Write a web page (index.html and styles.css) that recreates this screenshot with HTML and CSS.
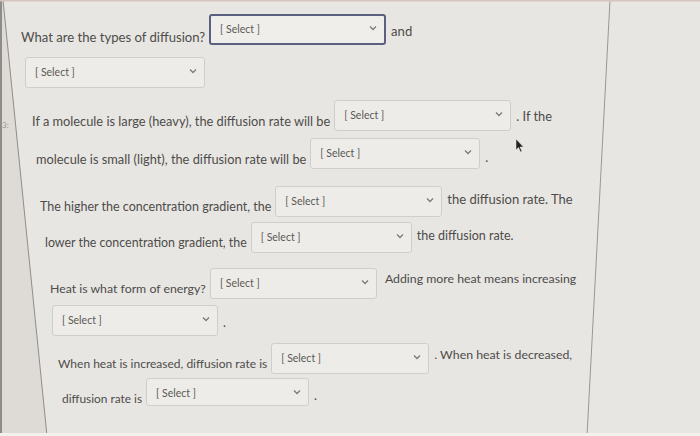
FILE: index.html
```
<!DOCTYPE html>
<html>
<head>
<meta charset="utf-8">
<link rel="stylesheet" href="styles.css">
</head>
<body>
<div class="page">
  <div class="row r1">
    <span class="lead f131">What are the types of diffusion?</span>
    <div class="sel focus w177"><span>[ Select ]</span><svg class="chev" viewBox="0 0 8 6"><path d="M1 1.5 L4 4.5 L7 1.5" /></svg></div>
    <span class="trail f131 t9">and</span>
  </div>
  <div class="row r2">
    <div class="sel w180"><span>[ Select ]</span><svg class="chev" viewBox="0 0 8 6"><path d="M1 1.5 L4 4.5 L7 1.5" /></svg></div>
  </div>

  <div class="row r3">
    <span class="lead f128">If a molecule is large (heavy), the diffusion rate will be</span>
    <div class="sel w177"><span>[ Select ]</span><svg class="chev" viewBox="0 0 8 6"><path d="M1 1.5 L4 4.5 L7 1.5" /></svg></div>
    <span class="trail f128 t8">. If the</span>
  </div>
  <div class="row r4">
    <span class="lead f128">molecule is small (light), the diffusion rate will be</span>
    <div class="sel w170"><span>[ Select ]</span><svg class="chev" viewBox="0 0 8 6"><path d="M1 1.5 L4 4.5 L7 1.5" /></svg></div>
    <span class="trail t12">.</span>
  </div>

  <div class="row r5">
    <span class="lead f125">The higher the concentration gradient, the</span>
    <div class="sel w167"><span>[ Select ]</span><svg class="chev" viewBox="0 0 8 6"><path d="M1 1.5 L4 4.5 L7 1.5" /></svg></div>
    <span class="trail f130 t5">the diffusion rate. The</span>
  </div>
  <div class="row r6">
    <span class="lead f124">lower the concentration gradient, the</span>
    <div class="sel w161"><span>[ Select ]</span><svg class="chev" viewBox="0 0 8 6"><path d="M1 1.5 L4 4.5 L7 1.5" /></svg></div>
    <span class="trail f125 t6">the diffusion rate.</span>
  </div>

  <div class="row r7">
    <span class="lead f123">Heat is what form of energy?</span>
    <div class="sel w167"><span>[ Select ]</span><svg class="chev" viewBox="0 0 8 6"><path d="M1 1.5 L4 4.5 L7 1.5" /></svg></div>
    <span class="trail f123 t3 ml8">Adding more heat means increasing</span>
  </div>
  <div class="row r8">
    <div class="sel w166"><span>[ Select ]</span><svg class="chev" viewBox="0 0 8 6"><path d="M1 1.5 L4 4.5 L7 1.5" /></svg></div>
    <span class="trail t10">.</span>
  </div>

  <div class="row r9">
    <span class="lead f120">When heat is increased, diffusion rate is</span>
    <div class="sel w158"><span>[ Select ]</span><svg class="chev" viewBox="0 0 8 6"><path d="M1 1.5 L4 4.5 L7 1.5" /></svg></div>
    <span class="trail f123 t4">. When heat is decreased,</span>
  </div>
  <div class="row r10">
    <span class="lead f119">diffusion rate is</span>
    <div class="sel w163 short"><span>[ Select ]</span><svg class="chev" viewBox="0 0 8 6"><path d="M1 1.5 L4 4.5 L7 1.5" /></svg></div>
    <span class="trail t10">.</span>
  </div>

  <svg class="frame" viewBox="0 0 700 436" width="700" height="436">
    <polygon points="0,0 3,0 47,436 0,436" fill="#dedbd7" />
    <rect x="0" y="0" width="2" height="436" fill="#8e8b88" />
    <line x1="3" y1="0" x2="47" y2="436" stroke="#8f8c89" stroke-width="1" />
    <line x1="610" y1="0" x2="587" y2="436" stroke="#9a9794" stroke-width="1" />
    <rect x="0" y="0" width="700" height="1.5" fill="#d9c2c0" />
    <rect x="0" y="433" width="700" height="3" fill="#f2f1ee" />
    <text x="2" y="128" class="mark">3:</text>
    <path class="cursor" d="M516 139 L516 150 L518.5 147.5 L520.5 152 L522 151.3 L520 147 L523.5 147 Z" />
  </svg>
</div>
</body>
</html>
```

FILE: styles.css
```
html, body {
  margin: 0;
  padding: 0;
}
body {
  width: 700px;
  height: 436px;
  overflow: hidden;
  background: #e8e6e2;
  font-family: Lato, "Open Sans", sans-serif;
  color: #4d4c4a;
}
.page {
  position: relative;
  width: 700px;
  height: 436px;
}
.row {
  display: flex;
  align-items: flex-start;
  height: 31px;
}
.lead {
  font-size: 12.5px;
  line-height: 16px;
  margin-top: 13px;
  margin-right: 4px;
  white-space: nowrap;
}
.trail {
  font-size: 12.5px;
  line-height: 16px;
  margin-left: 5px;
  white-space: nowrap;
}
.f119 { font-size: 11.9px; }
.f120 { font-size: 12px; }
.f123 { font-size: 12.3px; }
.f124 { font-size: 12.4px; }
.f125 { font-size: 12.5px; }
.f128 { font-size: 12.8px; }
.f130 { font-size: 13px; }
.f131 { font-size: 13.1px; }
.ml8 { margin-left: 8px; }
.r1 .lead { margin-top: 15px; }
.sel {
  box-sizing: border-box;
  height: 31px;
  flex: none;
  display: flex;
  align-items: flex-start;
  justify-content: space-between;
  background: #eeece8;
  border: 1px solid #d0cecb;
  border-radius: 3px;
  padding: 8px 7px 0 9px;
  font-size: 10.5px;
  color: #5a5956;
}
.sel.focus {
  border: 2px solid #5b5f80;
  background: #efeeeb;
  padding-top: 7px;
}
.sel.short { height: 28px; }
.chev {
  width: 8px;
  height: 6px;
  margin-top: 2px;
  fill: none;
  stroke: #7b7a78;
  stroke-width: 1.3;
}
.w158 { width: 158px; }
.w161 { width: 161px; }
.w163 { width: 163px; }
.w166 { width: 166px; }
.w167 { width: 167px; }
.w170 { width: 170px; }
.w177 { width: 177px; }
.w180 { width: 180px; }

.t3 { margin-top: 3px; }
.t4 { margin-top: 4px; }
.t5 { margin-top: 5px; }
.t6 { margin-top: 6px; }
.t8 { margin-top: 8px; }
.t9 { margin-top: 9px; }
.t10 { margin-top: 10px; }
.t12 { margin-top: 12px; }

.r1 { padding-left: 21px; padding-top: 14px; }
.r2 { padding-left: 25px; margin-top: 12px; }
.r3 { padding-left: 32px; margin-top: 12px; }
.r4 { padding-left: 36px; margin-top: 7px; }
.r5 { padding-left: 40px; margin-top: 17px; }
.r6 { padding-left: 45px; margin-top: 5px; }
.r7 { padding-left: 50px; margin-top: 15px; }
.r8 { padding-left: 52px; margin-top: 6px; }
.r9 { padding-left: 58px; margin-top: 7px; }
.r10 { padding-left: 62px; margin-top: 4px; }

.frame {
  position: absolute;
  left: 0;
  top: 0;
  pointer-events: none;
}
.mark {
  font-family: Lato, sans-serif;
  font-size: 8px;
  fill: #9a9792;
}
.cursor {
  fill: #222;
  stroke: #eee;
  stroke-width: 0.5;
}
```
